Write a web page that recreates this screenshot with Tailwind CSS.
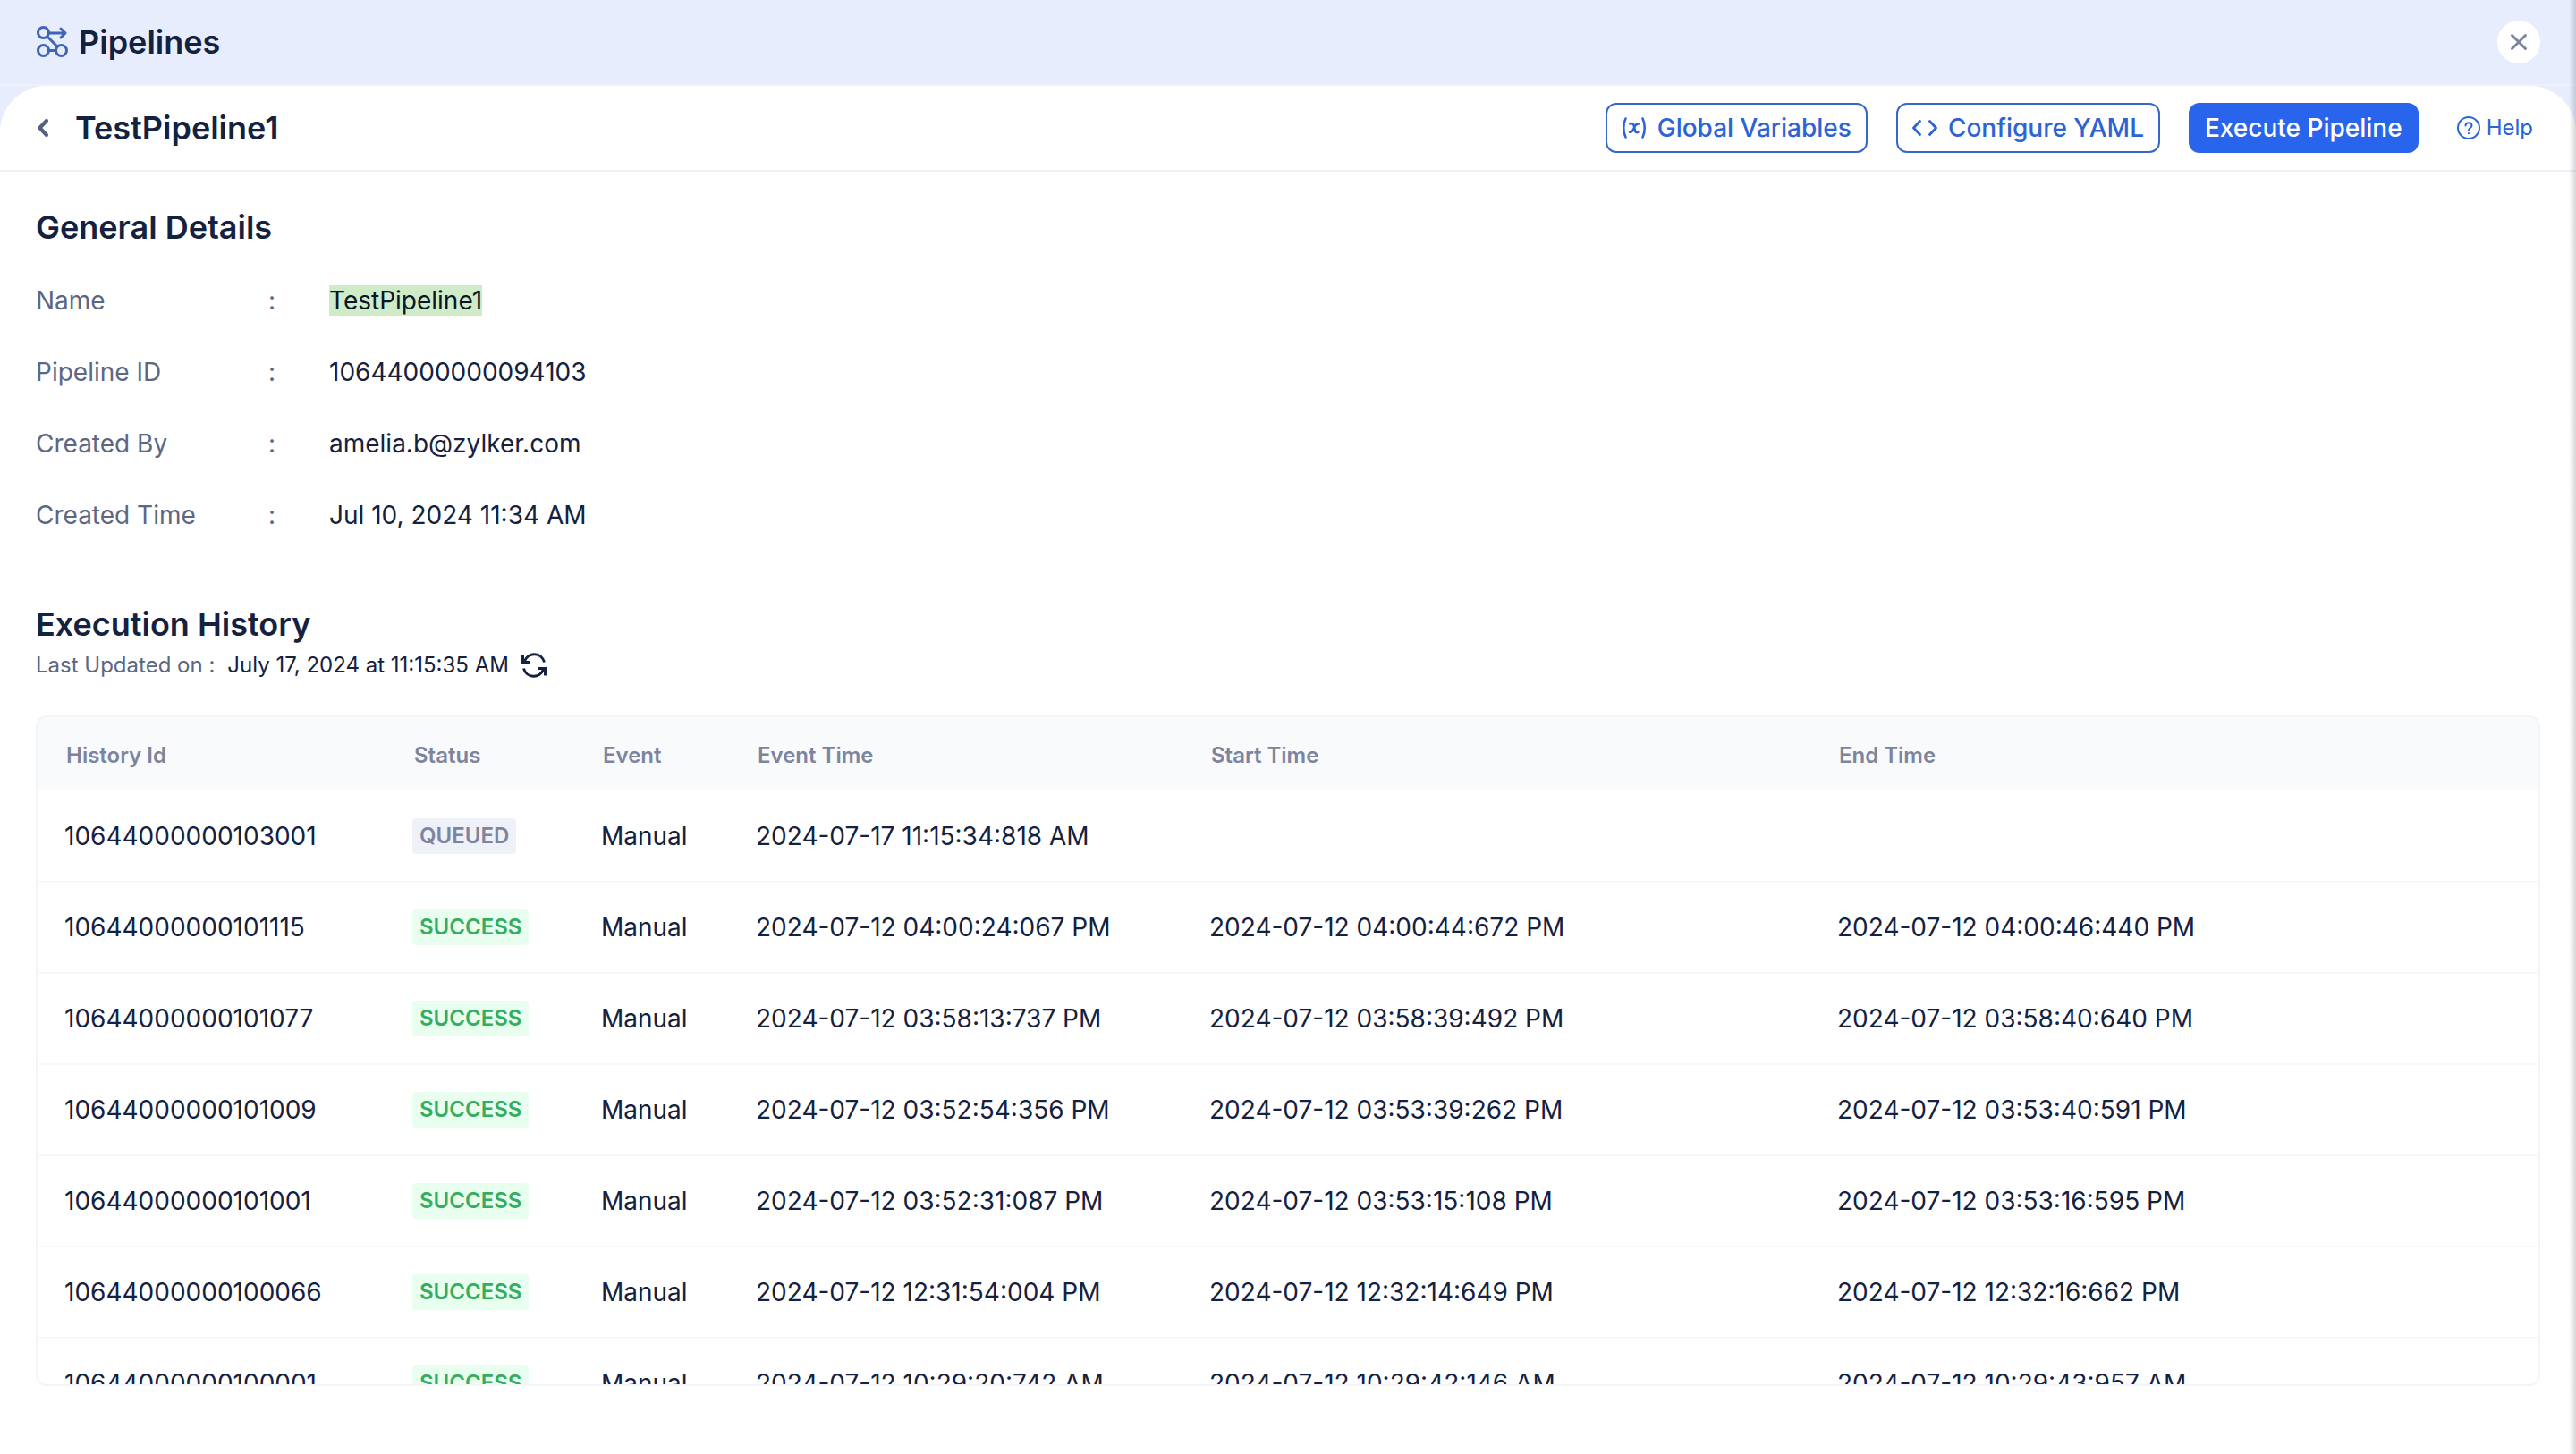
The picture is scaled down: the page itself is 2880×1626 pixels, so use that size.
<!DOCTYPE html>
<html lang="en">
<head>
  <meta charset="UTF-8" />
  <meta name="viewport" content="width=device-width, initial-scale=1.0" />
  <title>Pipelines - TestPipeline1</title>
  <script src="https://cdn.jsdelivr.net/npm/@tailwindcss/browser@4"></script>
</head>
<body class="relative min-h-screen bg-white font-['Inter',sans-serif] text-[28px] leading-[34px] text-[#14213f]">

  <!-- Top bar -->
  <header class="flex h-24 items-center justify-between border-b-2 border-[#eff0f8] bg-[#e7edfd] px-10">
    <div class="flex items-center gap-3">
      <svg class="h-9 w-9" viewBox="0 0 36 36" fill="none" stroke="#3f65b8" stroke-width="3" stroke-linecap="round" stroke-linejoin="round">
        <circle cx="8.500" cy="7.500" r="6" />
        <circle cx="8.500" cy="27.500" r="6" />
        <circle cx="28.500" cy="27.500" r="6" />
        <path d="M14.500 27.500h8M13 12l11 11M15 8h18M28 3l5 5-5 5" />
      </svg>
      <h1 class="text-4xl font-semibold">Pipelines</h1>
    </div>
    <button type="button" aria-label="Close" class="flex h-12 w-12 items-center justify-center rounded-full bg-white">
      <svg class="h-5 w-5" viewBox="0 0 20 20" fill="none" stroke="#7d859e" stroke-width="3" stroke-linecap="round">
        <path d="M2.500 2.500l15 15M17.500 2.500l-15 15" />
      </svg>
    </button>
  </header>

  <main class="bg-[#e7edfd]">
    <div class="rounded-t-[52px] bg-white">

      <!-- Pipeline bar -->
      <div class="flex h-24 items-center justify-between border-b-2 border-[#eef0f6] pl-10 pr-12">
        <div class="flex items-center gap-7">
          <button type="button" aria-label="Back">
            <svg class="h-6 w-4" viewBox="0 0 16 24" fill="none" stroke="#56617f" stroke-width="4.200" stroke-linecap="round" stroke-linejoin="round">
              <path d="M12 4L4.500 12l7.500 8" />
            </svg>
          </button>
          <h2 class="text-4xl font-semibold">TestPipeline1</h2>
        </div>
        <div class="flex items-center gap-8 font-medium text-[#2c63d6]">
          <button type="button" class="flex h-14 items-center gap-3 rounded-xl border-2 border-[#3667cd] px-4">
            <svg class="h-7 w-7" viewBox="0 0 28 28" fill="none" stroke="currentColor" stroke-width="2.600" stroke-linecap="round">
              <path d="M4.500 3.500c-3 6-3 15 0 21M23.500 3.500c3 6 3 15 0 21M9.500 9.500c3-1 4 0 4.500 3l.8 4c.4 2.500 1.500 3 3.700 2M19 9.500c-3-.5-4 2-5 4.500s-2 5-5 4.800" />
            </svg>
            Global Variables
          </button>
          <button type="button" class="flex h-14 items-center gap-3 rounded-xl border-2 border-[#3667cd] px-4">
            <svg class="h-7 w-7" viewBox="0 0 28 28" fill="none" stroke="currentColor" stroke-width="2.800" stroke-linecap="round" stroke-linejoin="round">
              <path d="M8.500 6.500l-7 7.500 7 7.500M19.500 6.500l7 7.500-7 7.500" />
            </svg>
            Configure YAML
          </button>
          <button type="button" class="h-14 rounded-xl bg-[#2965ec] px-[18px] text-white">Execute Pipeline</button>
          <a href="#" class="ml-2.5 flex items-center gap-1.5 text-2xl font-normal">
            <svg class="h-7 w-7" viewBox="0 0 28 28" fill="none" stroke="currentColor" stroke-width="2" stroke-linecap="round" stroke-linejoin="round">
              <circle cx="14" cy="14" r="12" />
              <path d="M10.500 11.500c0-4.500 7-4.500 7 0 0 2.500-3.500 2.500-3.500 5M14 20v.2" />
            </svg>
            Help
          </a>
        </div>
      </div>

      <div class="px-10 pt-10">
        <!-- General details -->
        <section>
          <h3 class="text-4xl font-semibold leading-[44px]">General Details</h3>
          <dl class="mt-5 grid grid-cols-[260px_68px_1fr] text-[28px] leading-[80px]">
            <dt class="text-[#5c6784]">Name</dt>
            <dd class="text-[#5c6784]">:</dd>
            <dd><mark class="bg-[#cfebc8] text-[#0b1524]">TestPipeline1</mark></dd>
            <dt class="text-[#5c6784]">Pipeline ID</dt>
            <dd class="text-[#5c6784]">:</dd>
            <dd>10644000000094103</dd>
            <dt class="text-[#5c6784]">Created By</dt>
            <dd class="text-[#5c6784]">:</dd>
            <dd>amelia.b@zylker.com</dd>
            <dt class="text-[#5c6784]">Created Time</dt>
            <dd class="text-[#5c6784]">:</dd>
            <dd>Jul 10, 2024 11:34 AM</dd>
          </dl>
        </section>

        <!-- Execution history -->
        <section class="mt-15">
          <h3 class="text-4xl font-semibold leading-[44px]">Execution History</h3>
          <div class="mt-2 flex items-center gap-3.5 text-2xl leading-8">
            <span class="text-[#5c6784]">Last Updated on :</span>
            <span>July 17, 2024 at 11:15:35 AM</span>
            <button type="button" aria-label="Refresh">
              <svg class="h-7 w-7" viewBox="0 0 28 28" fill="none" stroke="currentColor" stroke-width="3">
                <path d="M25.500 10.500A11.500 11.500 0 0 0 3.500 9.500M1.500 2.500v8h8.500M2.500 17.500A11.500 11.500 0 0 0 24.500 18.500M26.500 25.500v-8h-8.500" />
              </svg>
            </button>
          </div>

          <div class="mt-10 h-[750px] overflow-x-hidden overflow-y-auto rounded-xl border-2 border-[#f3f5fb] [scrollbar-width:none]">
            <table class="w-full table-fixed text-left">
              <colgroup>
                <col class="w-[389px]" />
                <col class="w-[211px]" />
                <col class="w-[173px]" />
                <col class="w-[507px]" />
                <col class="w-[702px]" />
                <col />
              </colgroup>
              <thead class="bg-[#f8fafc] text-2xl text-[#7d859e]">
                <tr class="h-[82px]">
                  <th class="pl-8 pt-1 font-semibold">History Id</th>
                  <th class="pl-8 pt-1 font-semibold">Status</th>
                  <th class="pl-8 pt-1 font-semibold">Event</th>
                  <th class="pl-8 pt-1 font-semibold">Event Time</th>
                  <th class="pl-8 pt-1 font-semibold">Start Time</th>
                  <th class="pl-8 pt-1 font-semibold">End Time</th>
                </tr>
              </thead>
              <tbody id="history"></tbody>
            </table>
          </div>
        </section>
      </div>
    </div>
  </main>

  <!-- Panel edge shadow -->
  <div class="absolute inset-y-0 right-0 w-2 bg-linear-to-r from-transparent to-[#5a6070]/25"></div>

  <script>
    const rows = [
      ["10644000000103001", "QUEUED", "2024-07-17 11:15:34:818 AM", "", ""],
      ["10644000000101115", "SUCCESS", "2024-07-12 04:00:24:067 PM", "2024-07-12 04:00:44:672 PM", "2024-07-12 04:00:46:440 PM"],
      ["10644000000101077", "SUCCESS", "2024-07-12 03:58:13:737 PM", "2024-07-12 03:58:39:492 PM", "2024-07-12 03:58:40:640 PM"],
      ["10644000000101009", "SUCCESS", "2024-07-12 03:52:54:356 PM", "2024-07-12 03:53:39:262 PM", "2024-07-12 03:53:40:591 PM"],
      ["10644000000101001", "SUCCESS", "2024-07-12 03:52:31:087 PM", "2024-07-12 03:53:15:108 PM", "2024-07-12 03:53:16:595 PM"],
      ["10644000000100066", "SUCCESS", "2024-07-12 12:31:54:004 PM", "2024-07-12 12:32:14:649 PM", "2024-07-12 12:32:16:662 PM"],
      ["10644000000100001", "SUCCESS", "2024-07-12 10:29:20:742 AM", "2024-07-12 10:29:42:146 AM", "2024-07-12 10:29:43:957 AM"]
    ];

    const badges = {
      QUEUED: "bg-[#eff1f8] text-[#7d859e]",
      SUCCESS: "bg-[#e8feef] text-[#35ad60]"
    };

    document.getElementById("history").innerHTML = rows.map(([id, status, event, start, end]) => `
      <tr class="h-[102px] border-b-2 border-[#f6f8fa]">
        <td class="pl-[30px]">${id}</td>
        <td class="pl-[30px]"><span class="block w-fit rounded-sm px-2 text-2xl leading-10 font-semibold ${badges[status]}">${status}</span></td>
        <td class="pl-[30px]">Manual</td>
        <td class="pl-[30px]">${event}</td>
        <td class="pl-[30px]">${start}</td>
        <td class="pl-[30px]">${end}</td>
      </tr>`).join("");
  </script>
</body>
</html>
